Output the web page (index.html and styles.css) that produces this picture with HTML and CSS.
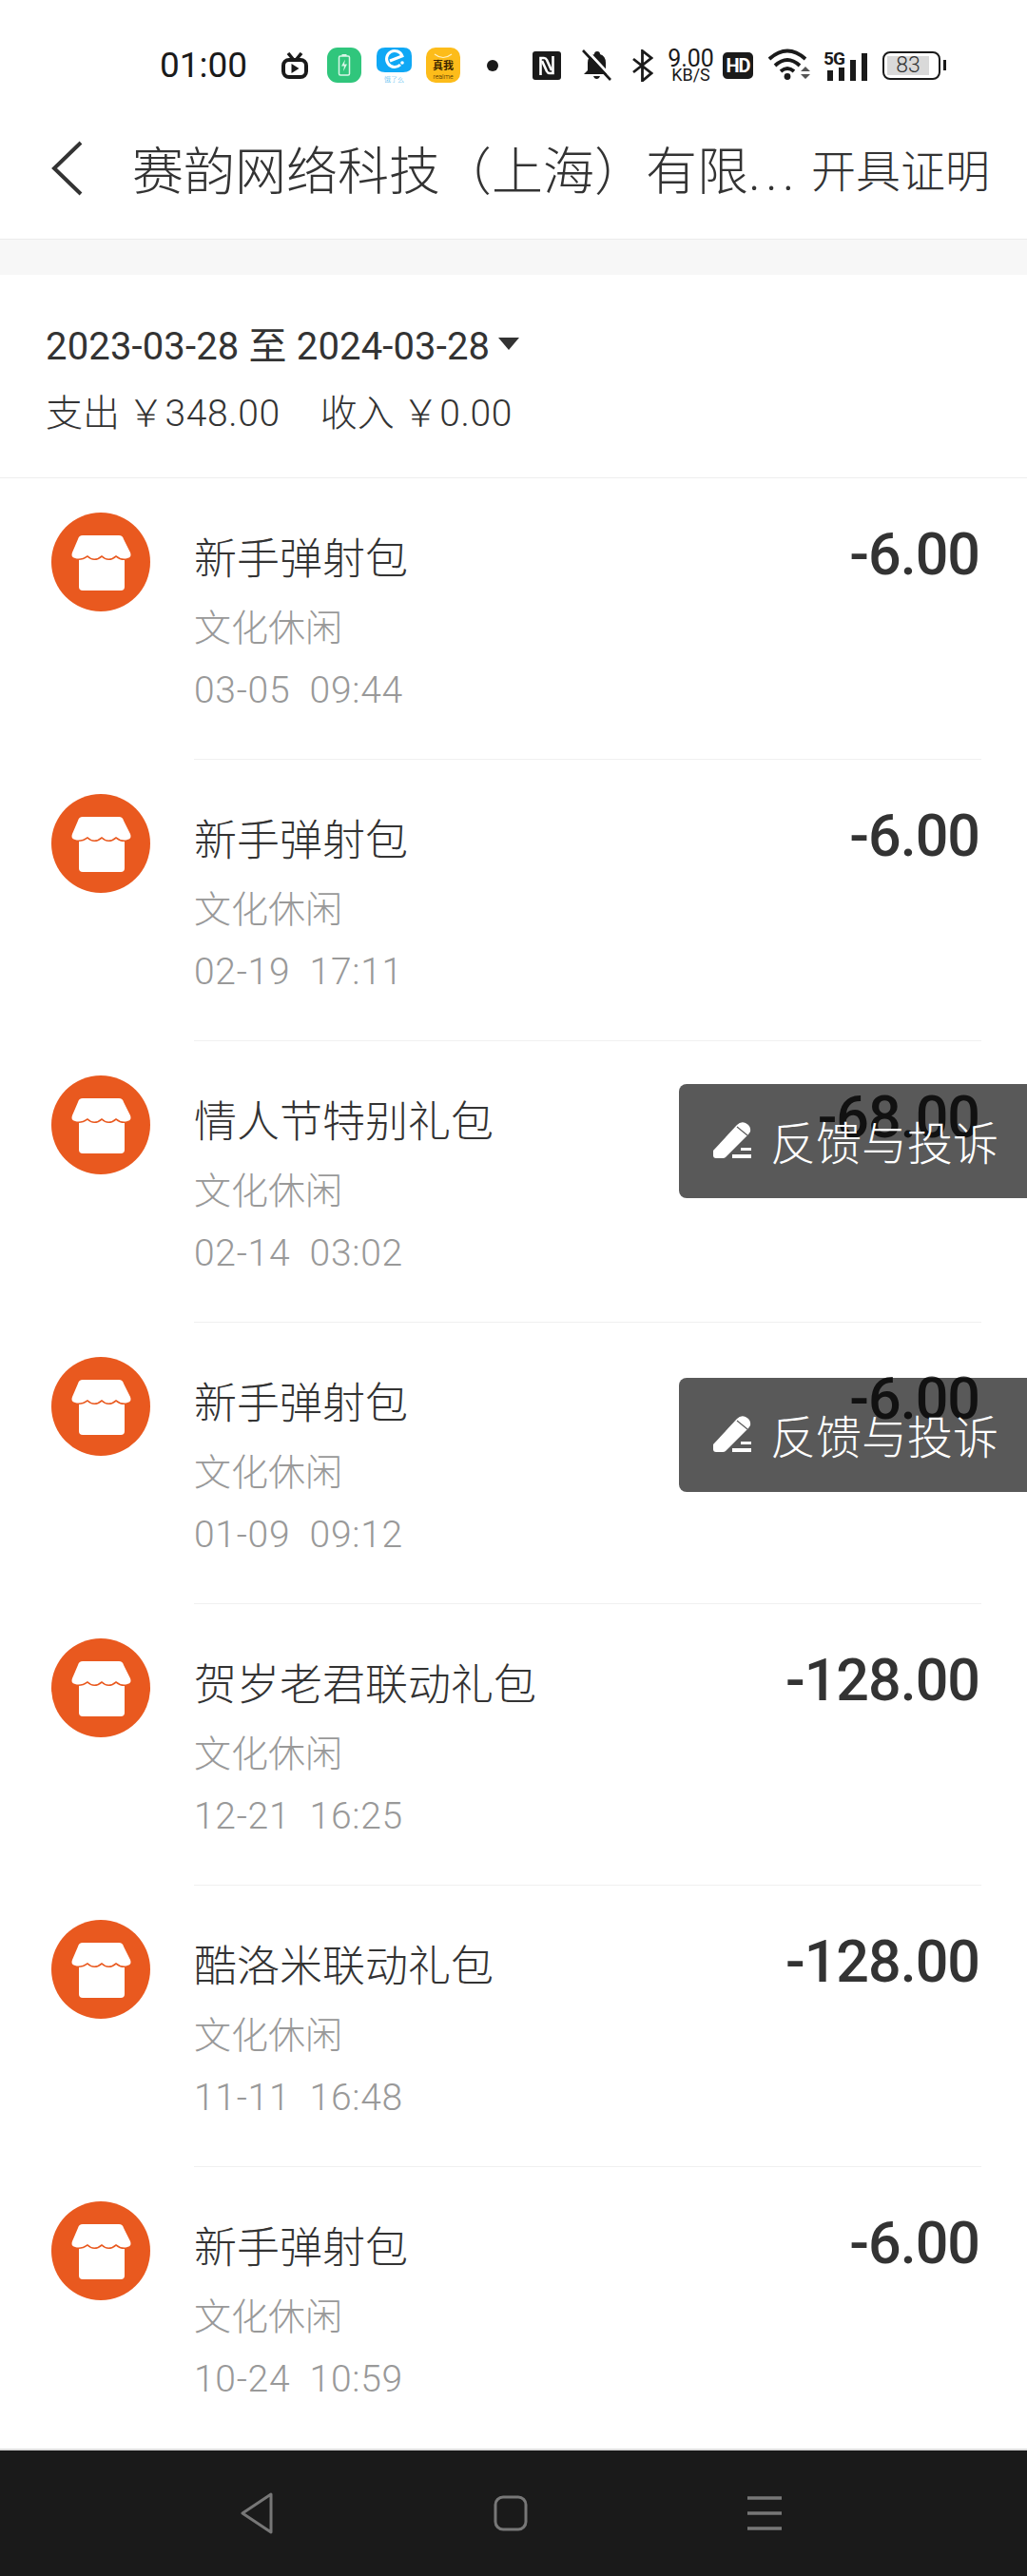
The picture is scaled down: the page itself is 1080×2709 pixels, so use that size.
FILE: index.html
```html
<!DOCTYPE html>
<html lang="zh-CN">
<head>
  <meta charset="UTF-8" />
  <meta name="viewport" content="width=device-width, initial-scale=1.0" />
  <title>账单</title>
  <link rel="stylesheet" href="styles.css">
</head>
<body>

  <svg class="defs" width="0" height="0">
    <symbol id="store" viewBox="0 0 104 104">
      <circle cx="52" cy="52" r="52" fill="#e9591f"/>
      <rect x="29" y="46" width="48" height="36" rx="4" fill="#fff"/>
      <path d="M33 24H71Q75 24 76 28L83 42Q85 47 80 48Q74 50 68 45Q60 52 53 45Q45 52 38 45Q31 50 25 48Q20 47 22 42L28 28Q29 24 33 24Z" fill="#fff" stroke="#e9591f" stroke-width="3" paint-order="stroke"/>
    </symbol>
    <symbol id="pencil" viewBox="0 0 40 40">
      <path d="M0 31L25 4Q29 0 34 2Q40 5 39 11Q38 13 36 15L13 38Q12 39 10 39H3Q0 39 0 36Z" fill="#fff"/>
      <path d="M25 6L36 15" stroke="#5a5a5a" stroke-width="1.200"/>
      <path d="M29 28H40V31H29ZM20 35H40V39H20Z" fill="#fff"/>
    </symbol>
  </svg>

  <div class="status-bar">
    <span class="clock">01:00</span>

    <svg class="st-tv" width="28" height="28" viewBox="0 0 28 28">
      <path d="M7 1L12 7M21 1L16 7" stroke="#1a1a1a" stroke-width="3.500" fill="none"/>
      <rect x="2" y="8" width="24" height="18" rx="6" fill="none" stroke="#1a1a1a" stroke-width="4"/>
      <path d="M10.500 12L18.500 17L10.500 22Z" fill="#1a1a1a"/>
    </svg>

    <svg class="st-app1" width="36" height="37" viewBox="0 0 36 37">
      <rect width="36" height="37" rx="11" fill="#30c67c"/>
      <rect x="12.500" y="9" width="11" height="20" rx="1.500" fill="none" stroke="#d9f6e7" stroke-width="1.500"/>
      <rect x="15.500" y="7" width="5" height="2" fill="#d9f6e7"/>
      <path d="M19 12.500L15 19.500H18L17 25L21 17.500H18Z" fill="#d9f6e7"/>
    </svg>

    <svg class="st-app2" width="37" height="37" viewBox="0 0 37 37">
      <path d="M9 0H28Q37 0 37 9V19Q37 26 28 26H9Q0 26 0 19V9Q0 0 9 0Z" fill="#0fa8f5"/>
      <path d="M25 18A8.500 8.500 0 1 1 27 9L14 14" fill="none" stroke="#fff" stroke-width="3"/>
      <circle cx="27" cy="16" r="1.800" fill="#fff"/>
      <text x="18.500" y="35.500" text-anchor="middle" class="st-tiny" fill="#3db4ee">饿了么</text>
    </svg>

    <svg class="st-app3" width="36" height="37" viewBox="0 0 36 37">
      <rect width="36" height="37" rx="10" fill="#fdbc1a"/>
      <path d="M9 7Q18 14 27 7" fill="none" stroke="#fff1c4" stroke-width="1.200"/>
      <text x="18" y="23" text-anchor="middle" class="st-cn" fill="#3a2500">真我</text>
      <text x="18" y="33" text-anchor="middle" class="st-tiny" fill="#3a2500">realme</text>
    </svg>

    <span class="st-dot"></span>

    <svg class="st-nfc" width="30" height="30" viewBox="0 0 30 30">
      <rect width="30" height="30" rx="3" fill="#1a1a1a"/>
      <path d="M8.500 25V7H12Q14 7 15 9L20 20" fill="none" stroke="#fff" stroke-width="2.600"/>
      <path d="M21.500 5V23H18Q16 23 15 21L10 10" fill="none" stroke="#fff" stroke-width="2.600"/>
    </svg>

    <svg class="st-bell" width="31" height="33" viewBox="0 0 31 33">
      <path d="M16 2Q19 2 19 5Q25 7 25 14V22L28 26H2L6 22V14Q6 7 13 5Q13 2 16 2ZM12 28H19Q18 31 15.500 31Q13 31 12 28Z" fill="#1a1a1a"/>
      <path d="M4 0L33 31" stroke="#fff" stroke-width="3"/>
      <path d="M1 1L30 32" stroke="#1a1a1a" stroke-width="2.600"/>
    </svg>

    <svg class="st-bt" width="22" height="34" viewBox="0 0 22 34">
      <path d="M1 10L20 25L10.500 33V1.500L20 9L1 24" fill="none" stroke="#1a1a1a" stroke-width="2.800"/>
    </svg>

    <div class="st-speed">
      <span class="st-speed-num">9.00</span>
      <span class="st-speed-unit">KB/S</span>
    </div>

    <span class="st-hd">HD</span>

    <svg class="st-wifi" width="45" height="36" viewBox="0 0 45 36">
      <path d="M1 11Q20 -6 39 11M7 18Q20 6 33 18M13 24Q20 18 27 24" fill="none" stroke="#1a1a1a" stroke-width="3.800"/>
      <circle cx="20" cy="29.500" r="3.400" fill="#1a1a1a"/>
      <path d="M34 24L39 19L44 24ZM34 27L39 32L44 27Z" fill="#555"/>
    </svg>

    <div class="st-signal">
      <span class="st-5g">5G</span>
      <span class="st-bar st-bar-1"></span>
      <span class="st-bar st-bar-2"></span>
      <span class="st-bar st-bar-3"></span>
      <span class="st-bar st-bar-4"></span>
    </div>

    <div class="st-battery">
      <div class="st-battery-body"><span class="st-battery-level">83</span></div>
      <span class="st-battery-cap"></span>
    </div>
  </div>

  <div class="top-bar">
    <svg class="back" width="34" height="58" viewBox="0 0 34 58">
      <path d="M32 2L4 29L32 56" fill="none" stroke="#333" stroke-width="4"/>
    </svg>
    <div class="top-title">赛韵网络科技（上海）有限<span class="top-dots">...</span></div>
    <div class="top-action">开具证明</div>
  </div>

  <div class="gap"></div>

  <div class="filter">
    <div class="filter-date">
      <span>2023-03-28 至 2024-03-28</span>
      <span class="caret"></span>
    </div>
    <div class="filter-sum">
      <span>支出</span><span class="sum-val">￥348.00</span>
      <span class="sum-in">收入</span><span class="sum-val">￥0.00</span>
    </div>
  </div>

  <div class="list">
    <div class="row">
      <svg class="row-icon"><use href="#store"/></svg>
      <div class="row-body">
        <div class="row-text">
          <div class="row-title">新手弹射包</div>
          <div class="row-cat">文化休闲</div>
          <div class="row-time">03-05&nbsp;&nbsp;09:44</div>
        </div>
        <div class="row-amount">-6.00</div>
      </div>
    </div>

    <div class="row">
      <svg class="row-icon"><use href="#store"/></svg>
      <div class="row-body">
        <div class="row-text">
          <div class="row-title">新手弹射包</div>
          <div class="row-cat">文化休闲</div>
          <div class="row-time">02-19&nbsp;&nbsp;17:11</div>
        </div>
        <div class="row-amount">-6.00</div>
      </div>
    </div>

    <div class="row">
      <svg class="row-icon"><use href="#store"/></svg>
      <div class="row-body">
        <div class="row-text">
          <div class="row-title">情人节特别礼包</div>
          <div class="row-cat">文化休闲</div>
          <div class="row-time">02-14&nbsp;&nbsp;03:02</div>
        </div>
        <div class="row-amount">-68.00</div>
      </div>
      <div class="toast toast-a">
        <svg class="toast-icon"><use href="#pencil"/></svg>
        <span>反馈与投诉</span>
      </div>
    </div>

    <div class="row">
      <svg class="row-icon"><use href="#store"/></svg>
      <div class="row-body">
        <div class="row-text">
          <div class="row-title">新手弹射包</div>
          <div class="row-cat">文化休闲</div>
          <div class="row-time">01-09&nbsp;&nbsp;09:12</div>
        </div>
        <div class="row-amount">-6.00</div>
      </div>
      <div class="toast toast-b">
        <svg class="toast-icon"><use href="#pencil"/></svg>
        <span>反馈与投诉</span>
      </div>
    </div>

    <div class="row">
      <svg class="row-icon"><use href="#store"/></svg>
      <div class="row-body">
        <div class="row-text">
          <div class="row-title">贺岁老君联动礼包</div>
          <div class="row-cat">文化休闲</div>
          <div class="row-time">12-21&nbsp;&nbsp;16:25</div>
        </div>
        <div class="row-amount">-128.00</div>
      </div>
    </div>

    <div class="row">
      <svg class="row-icon"><use href="#store"/></svg>
      <div class="row-body">
        <div class="row-text">
          <div class="row-title">酷洛米联动礼包</div>
          <div class="row-cat">文化休闲</div>
          <div class="row-time">11-11&nbsp;&nbsp;16:48</div>
        </div>
        <div class="row-amount">-128.00</div>
      </div>
    </div>

    <div class="row row-last">
      <svg class="row-icon"><use href="#store"/></svg>
      <div class="row-body">
        <div class="row-text">
          <div class="row-title">新手弹射包</div>
          <div class="row-cat">文化休闲</div>
          <div class="row-time">10-24&nbsp;&nbsp;10:59</div>
        </div>
        <div class="row-amount">-6.00</div>
      </div>
    </div>
  </div>

  <div class="nav-bar">
    <svg width="36" height="46" viewBox="0 0 36 46">
      <path d="M33 3L3 23L33 43Z" fill="none" stroke="#777" stroke-width="3" stroke-linejoin="round"/>
    </svg>
    <svg width="36" height="38" viewBox="0 0 36 38">
      <rect x="2" y="2" width="32" height="34" rx="8" fill="none" stroke="#777" stroke-width="3"/>
    </svg>
    <svg width="38" height="38" viewBox="0 0 38 38">
      <path d="M1 3H37M1 19H37M1 35H37" stroke="#777" stroke-width="3.500"/>
    </svg>
  </div>

</body>
</html>
```

FILE: styles.css
```css
* {
  box-sizing: border-box;
}

html, body {
  margin: 0;
  padding: 0;
}

body {
  width: 1080px;
  height: 2709px;
  overflow: hidden;
  background-color: #fff;
  color: #333;
  font-family: Roboto, "Noto Sans CJK SC", sans-serif;
  font-weight: 300;
}

.defs {
  position: absolute;
}

/* status bar */
.status-bar {
  display: flex;
  align-items: center;
  height: 136px;
  padding-left: 168px;
  padding-top: 1px;
  color: #1a1a1a;
}

.clock {
  width: 128px;
  font-size: 37px;
  font-weight: 400;
}

.st-tiny {
  font-size: 7px;
  font-family: Roboto, "Noto Sans CJK SC", sans-serif;
}

.st-cn {
  font-size: 11px;
  font-weight: 700;
  font-family: "Noto Sans CJK SC", sans-serif;
}

.st-app1 { margin-left: 20px; }
.st-app2 { margin-left: 16px; }
.st-app3 { margin-left: 15px; }

.st-dot {
  width: 12px;
  height: 12px;
  margin-left: 28px;
  border-radius: 50%;
  background-color: #1a1a1a;
}

.st-nfc { margin-left: 36px; }
.st-bell { margin-left: 22px; }
.st-bt { margin-left: 22px; }

.st-speed {
  display: flex;
  flex-direction: column;
  align-items: center;
  width: 51px;
  margin-left: 14px;
  line-height: 1;
}

.st-speed-num {
  font-size: 25px;
  font-weight: 400;
  height: 21px;
}

.st-speed-unit {
  font-size: 18px;
  font-weight: 400;
}

.st-hd {
  width: 32px;
  height: 28px;
  margin-left: 8px;
  border-radius: 5px;
  background-color: #1a1a1a;
  color: #fff;
  font-size: 20px;
  font-weight: 700;
  line-height: 28px;
  text-align: center;
  letter-spacing: -1px;
}

.st-wifi { margin-left: 16px; }

.st-signal {
  display: flex;
  align-items: flex-end;
  position: relative;
  gap: 6px;
  width: 46px;
  height: 32px;
  margin-left: 13px;
  padding-left: 4px;
}

.st-5g {
  position: absolute;
  left: 0;
  top: -1px;
  font-size: 19px;
  font-weight: 700;
  line-height: 1;
  letter-spacing: -1px;
}

.st-bar {
  width: 6px;
  background-color: #1a1a1a;
}

.st-bar-1 { height: 11px; }
.st-bar-2 { height: 14px; }
.st-bar-3 { height: 22px; }
.st-bar-4 { height: 29px; }

.st-battery {
  display: flex;
  align-items: center;
  margin-left: 16px;
}

.st-battery-body {
  width: 61px;
  height: 30px;
  padding: 3px;
  border: 2px solid #1a1a1a;
  border-radius: 8px;
}

.st-battery-level {
  display: block;
  width: 44px;
  height: 20px;
  background-color: #d9d9d9;
  font-size: 23px;
  font-weight: 300;
  line-height: 20px;
  text-align: center;
  color: #333;
}

.st-battery-cap {
  width: 3px;
  height: 11px;
  margin-left: 3px;
  background-color: #1a1a1a;
}

/* title bar */
.top-bar {
  display: flex;
  align-items: center;
  height: 116px;
  padding-left: 53px;
  padding-bottom: 34px;
  border-bottom: 1px solid #ebebeb;
}

.top-title {
  width: 714px;
  margin-left: 52px;
  font-size: 54px;
  white-space: nowrap;
}

.top-dots {
  letter-spacing: 5px;
}

.top-action {
  font-size: 47px;
  white-space: nowrap;
}

.gap {
  height: 37px;
  background-color: #f7f7f7;
}

/* date filter */
.filter {
  height: 214px;
  padding: 43px 48px 0;
  border-bottom: 1px solid #eee;
  font-size: 39px;
}

.filter-date {
  display: flex;
  align-items: center;
  height: 58px;
  font-size: 40px;
  font-weight: 400;
  letter-spacing: 0.15px;
}

.caret {
  width: 0;
  height: 0;
  margin-left: 9px;
  border-left: 11px solid transparent;
  border-right: 11px solid transparent;
  border-top: 13px solid #333;
}

.filter-sum {
  display: flex;
  align-items: center;
  height: 58px;
  margin-top: 12px;
}

.sum-val {
  margin-left: 8px;
  letter-spacing: 0.6px;
}

.sum-in {
  margin-left: 42px;
}

/* bill rows */
.row {
  display: flex;
  position: relative;
  height: 296px;
  padding-left: 54px;
}

.row-icon {
  flex: none;
  width: 104px;
  height: 104px;
  margin-top: 36px;
}

.row-body {
  display: flex;
  justify-content: space-between;
  width: 828px;
  height: 296px;
  margin-left: 46px;
  border-bottom: 1px solid #f0f0f0;
}

.row-last .row-body {
  border-bottom: none;
}

.row-text {
  padding-top: 56px;
}

.row-title {
  font-size: 45px;
  line-height: 60px;
  white-space: nowrap;
}

.row-cat {
  margin-top: 17px;
  font-size: 39px;
  line-height: 50px;
  color: #999;
}

.row-time {
  margin-top: 15px;
  font-size: 39px;
  line-height: 50px;
  letter-spacing: 0.7px;
  color: #999;
}

.row-amount {
  margin-top: 45px;
  padding-right: 2px;
  font-size: 61px;
  font-weight: 500;
  line-height: 70px;
  letter-spacing: -1px;
  color: #333;
}

/* overlay button */
.toast {
  display: flex;
  align-items: center;
  position: absolute;
  right: 0;
  width: 366px;
  height: 120px;
  padding-left: 36px;
  padding-bottom: 2px;
  border-radius: 8px 0 0 8px;
  background-color: rgba(0, 0, 0, 0.65);
  color: #fff;
  font-size: 48px;
}

.toast-a { top: 45px; }
.toast-b { top: 58px; }

.toast-icon {
  width: 40px;
  height: 40px;
  margin-right: 20px;
}

/* phone navigation */
.nav-bar {
  display: flex;
  justify-content: space-between;
  align-items: center;
  height: 134px;
  padding: 0 257px 0 252px;
  border-top: 2px solid #ddd;
  background-color: #1a1a1a;
}
```
